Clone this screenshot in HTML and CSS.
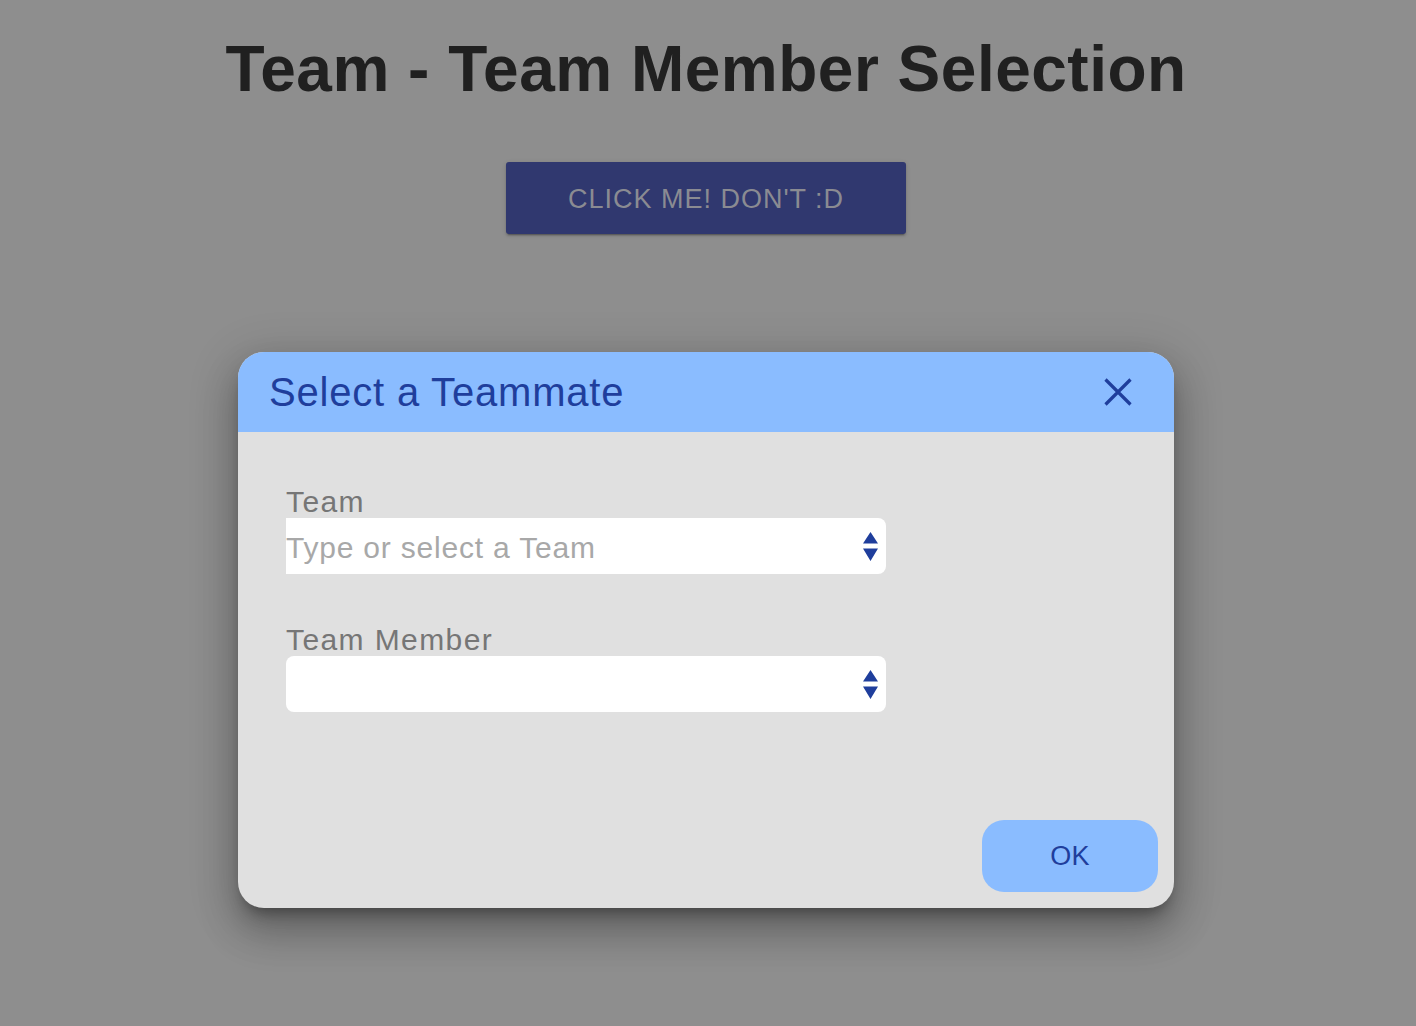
FILE: index.html
```html
<!DOCTYPE html>
<html lang="en">
<head>
<meta charset="utf-8">
<title>Team - Team Member Selection</title>
<link rel="stylesheet" href="styles.css">
</head>
<body>
<main class="page">
  <h1 class="page-title">Team - Team Member Selection</h1>
  <button class="cta" type="button">CLICK ME! DON'T :D</button>

  <section class="dialog" role="dialog" aria-labelledby="dlg-title">
    <header class="dialog-header">
      <h2 class="dialog-title" id="dlg-title">Select a Teammate</h2>
      <button class="close-btn" type="button" aria-label="Close">
        <svg width="30" height="30" viewBox="0 0 30 30" aria-hidden="true">
          <path d="M2.5 2.5 L27.5 27.5 M27.5 2.5 L2.5 27.5" stroke="#1f3e9c" stroke-width="3.2" stroke-linecap="butt" fill="none"/>
        </svg>
      </button>
    </header>
    <div class="dialog-body">
      <div class="field">
        <label class="field-label" for="team">Team</label>
        <div class="select">
          <input class="select-input" id="team" type="text" placeholder="Type or select a Team">
          <svg class="arrows" width="15" height="30" viewBox="0 0 15 30" aria-hidden="true">
            <path d="M0 11.6 L7.5 0 L15 11.6 Z M0 16.6 L15 16.6 L7.5 29 Z" fill="#1f3e9c"/>
          </svg>
        </div>
      </div>
      <div class="field">
        <label class="field-label" for="member">Team Member</label>
        <div class="select select-round">
          <span class="select-value" id="member"></span>
          <svg class="arrows" width="15" height="30" viewBox="0 0 15 30" aria-hidden="true">
            <path d="M0 11.6 L7.5 0 L15 11.6 Z M0 16.6 L15 16.6 L7.5 29 Z" fill="#1f3e9c"/>
          </svg>
        </div>
      </div>
      <div class="dialog-footer">
        <button class="ok-btn" type="button">OK</button>
      </div>
    </div>
  </section>
</main>
</body>
</html>
```
FILE: styles.css
```css
* { box-sizing: border-box; }

html, body {
  margin: 0;
  padding: 0;
}

body {
  background: #8e8e8e;
  font-family: "Liberation Sans", Arial, sans-serif;
  height: 1026px;
  overflow: hidden;
}

.page {
  display: flex;
  flex-direction: column;
  align-items: center;
  padding-right: 4px;
}

.page-title {
  margin: 37px 0 0;
  font-size: 64px;
  line-height: 64px;
  font-weight: 700;
  color: #202020;
  letter-spacing: 0.5px;
}

.cta {
  margin-top: 61px;
  width: 400px;
  height: 72px;
  border: none;
  border-radius: 3px;
  background: #30386f;
  color: #8a8b92;
  font-family: inherit;
  font-size: 27px;
  letter-spacing: 1px;
  box-shadow: 0 3px 1px -2px rgba(0,0,0,.2), 0 2px 2px 0 rgba(0,0,0,.14), 0 1px 5px 0 rgba(0,0,0,.12);
  padding: 2px 0 0;
}

.dialog {
  margin-top: 118px;
  width: 936px;
  height: 556px;
  border-radius: 26px;
  overflow: hidden;
  background: #e0e0e0;
  display: flex;
  flex-direction: column;
  box-shadow: 0 11px 15px -7px rgba(0,0,0,.38), 0 24px 38px 3px rgba(0,0,0,.2), 0 9px 46px 8px rgba(0,0,0,.14);
}

.dialog-header {
  height: 80px;
  flex: none;
  background: #8abcff;
  display: flex;
  align-items: center;
  justify-content: space-between;
  padding: 0 41px 0 31px;
}

.dialog-title {
  margin: 0;
  font-size: 40px;
  line-height: 40px;
  font-weight: 400;
  color: #1f3e9c;
  letter-spacing: 0.8px;
}

.close-btn {
  border: none;
  background: none;
  padding: 0;
  width: 30px;
  height: 30px;
  display: flex;
}

.dialog-body {
  flex: 1;
  display: flex;
  flex-direction: column;
  padding: 54px 16px 16px 48px;
}

.field + .field {
  margin-top: 50px;
}

.field-label {
  display: block;
  font-size: 30px;
  line-height: 32px;
  color: #767676;
  letter-spacing: 1.4px;
}

.select {
  width: 600px;
  height: 56px;
  background: #ffffff;
  border-radius: 0 8px 8px 0;
  display: flex;
  align-items: center;
  justify-content: space-between;
  padding-right: 8px;
}

.select-round {
  border-radius: 8px;
}

.select-input {
  flex: 1;
  height: 56px;
  border: none;
  outline: none;
  padding: 3px 0 0;
  margin: 0;
  background: #ffffff;
  border-radius: 0;
  font-family: inherit;
  font-size: 30px;
  letter-spacing: 0.8px;
  color: #333;
}

.select-input::placeholder {
  color: #a8a8a8;
  opacity: 1;
}

.select-value {
  flex: 1;
}

.arrows {
  flex: none;
  display: block;
  margin-top: 1px;
}

.dialog-footer {
  margin-top: auto;
  display: flex;
  justify-content: flex-end;
}

.ok-btn {
  width: 176px;
  height: 72px;
  border: none;
  border-radius: 22px;
  background: #8abcff;
  color: #1f3e9c;
  font-family: inherit;
  font-size: 27px;
  letter-spacing: 0.3px;
  padding: 0;
}
```
